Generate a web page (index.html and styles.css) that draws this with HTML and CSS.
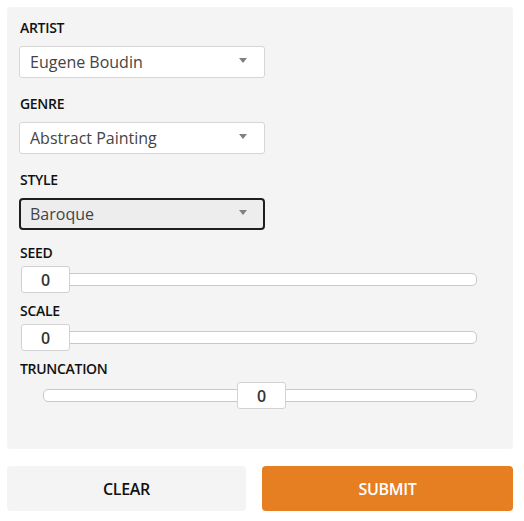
FILE: index.html
```html
<!DOCTYPE html>
<html>
<head>
<meta charset="utf-8">
<link rel="stylesheet" href="styles.css">
</head>
<body>
<div class="page">
  <div class="panel">
    <div class="label">ARTIST</div>
    <div class="select"><span>Eugene Boudin</span><i class="caret"></i></div>
    <div class="label gap">GENRE</div>
    <div class="select"><span>Abstract Painting</span><i class="caret"></i></div>
    <div class="label gap">STYLE</div>
    <div class="select active"><span>Baroque</span><i class="caret"></i></div>

    <div class="label gap2">SEED</div>
    <div class="slider">
      <div class="track"></div>
      <div class="thumb thumb-min">0</div>
    </div>
    <div class="label gap3">SCALE</div>
    <div class="slider">
      <div class="track"></div>
      <div class="thumb thumb-min">0</div>
    </div>
    <div class="label gap3">TRUNCATION</div>
    <div class="slider">
      <div class="track"></div>
      <div class="thumb thumb-mid">0</div>
    </div>
  </div>
  <div class="buttons">
    <button class="btn clear">CLEAR</button>
    <button class="btn submit">SUBMIT</button>
  </div>
</div>
</body>
</html>
```
FILE: styles.css
```css
* { box-sizing: border-box; }
html, body { margin: 0; padding: 0; background: #fff; }
body { font-family: "Open Sans", "DejaVu Sans", sans-serif; }
.page { padding: 7px 11px 0 7px; width: 524px; }
.panel {
  background: #f4f4f4;
  border-radius: 4px;
  padding: 11px 12px 41px 12px;
  height: 442px;
}
.label {
  font-size: 14px;
  font-weight: 600;
  line-height: 19px;
  color: #111;
  margin-bottom: 9px;
  padding-left: 1px;
  letter-spacing: -0.3px;
}
.label.gap { margin-top: 16px; }
.label.gap2 { margin-top: 13px; margin-bottom: 4px; }
.label.gap3 { margin-top: 8px; margin-bottom: 4px; }
.select {
  width: 246px;
  height: 32px;
  background: #fff;
  border: 1px solid #d6d6d6;
  border-radius: 3px;
  display: flex;
  align-items: center;
  justify-content: space-between;
  padding: 0 17px 0 10px;
  font-size: 16px;
  color: #444;
}
.select.active {
  background: #ededed;
  border: 2px solid #1e1e1e;
  border-radius: 4px;
  padding-left: 9px;
  padding-right: 16px;
}
.caret {
  width: 0; height: 0;
  border-left: 4px solid transparent;
  border-right: 4px solid transparent;
  border-top: 5px solid #808080;
  margin-top: -3px;
}
.slider {
  position: relative;
  height: 27px;
  display: flex;
  align-items: center;
}
.track {
  margin-left: 24px;
  width: 434px;
  height: 13px;
  background: #fff;
  border: 1px solid #c9c9c9;
  border-radius: 5px;
  margin-top: -1px;
}
.thumb {
  position: absolute;
  top: 0;
  width: 49px;
  height: 27px;
  background: #fff;
  border: 1px solid #d2d2d2;
  border-radius: 3px;
  font-size: 16px;
  font-weight: 600;
  color: #333;
  display: flex;
  align-items: center;
  justify-content: center;
}
.thumb-min { left: 2px; }
.thumb-mid { left: 218px; }
.buttons {
  display: flex;
  gap: 16px;
  margin-top: 17px;
}
.btn {
  height: 45px;
  border: none;
  border-radius: 4px;
  font-family: "Open Sans", "DejaVu Sans", sans-serif;
  font-size: 16px;
  font-weight: 600;
  letter-spacing: -0.3px;
  padding: 0;
}
.clear { width: 239px; background: #f4f4f4; color: #111; }
.submit { flex: 1; background: #e67e22; color: #fff; }
```
